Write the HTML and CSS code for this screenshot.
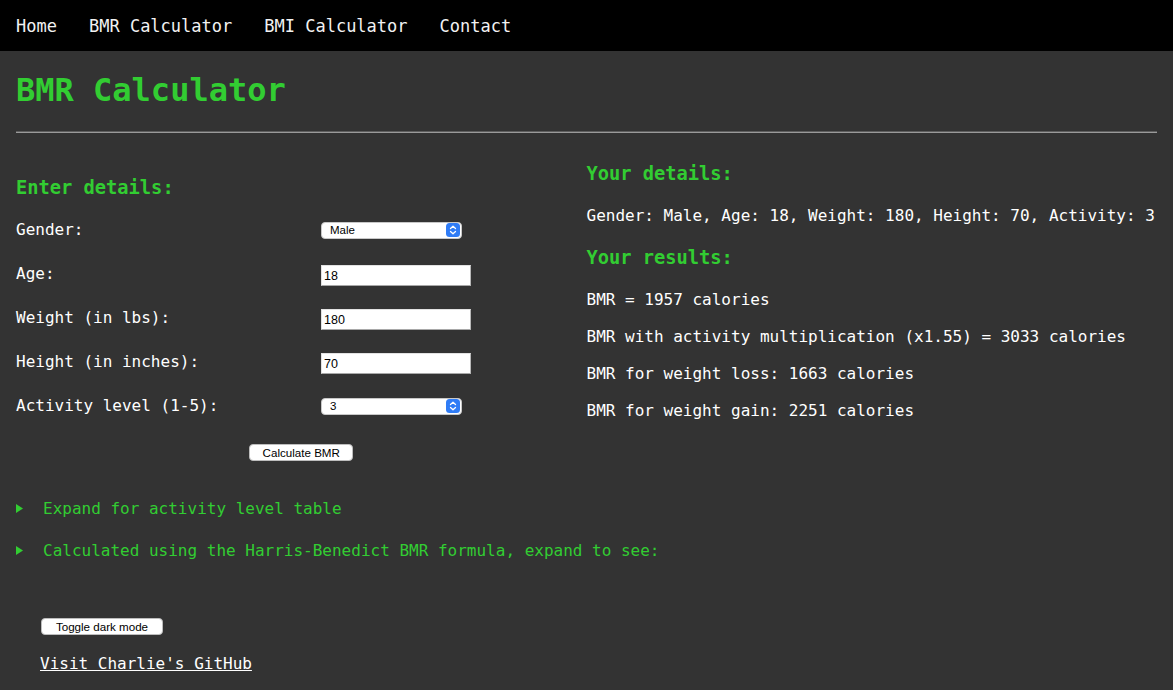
FILE: index.html
```html
<!DOCTYPE html>
<html lang="en">
<head>
<meta charset="utf-8">
<title>BMR Calculator</title>
<link rel="stylesheet" href="styles.css">
</head>
<body>
<nav class="topnav">
  <a href="#">Home</a>
  <a href="#">BMR Calculator</a>
  <a href="#">BMI Calculator</a>
  <a href="#">Contact</a>
</nav>
<main class="main">
  <h1 class="title">BMR Calculator</h1>
  <hr class="rule">
  <div class="columns">
    <form class="col col-left">
      <h3 class="heading">Enter details:</h3>
      <div class="fields">
        <label class="label" for="gender">Gender:</label>
        <span class="select-wrap">
          <select id="gender" class="select"><option>Male</option><option>Female</option></select>
          <svg class="stepper" width="14" height="14" viewBox="0 0 14 14"><rect width="14" height="14" rx="3.5" fill="#2f7cf6"/><path d="M4.5 5.6 7 3.3 9.5 5.6M4.5 8.4 7 10.7 9.5 8.4" fill="none" stroke="#fff" stroke-width="1.3" stroke-linecap="round" stroke-linejoin="round"/></svg>
        </span>
        <label class="label" for="age">Age:</label>
        <input id="age" class="input" type="text" value="18">
        <label class="label" for="weight">Weight (in lbs):</label>
        <input id="weight" class="input" type="text" value="180">
        <label class="label" for="height">Height (in inches):</label>
        <input id="height" class="input" type="text" value="70">
        <label class="label" for="activity">Activity level (1-5):</label>
        <span class="select-wrap">
          <select id="activity" class="select"><option>1</option><option>2</option><option selected>3</option><option>4</option><option>5</option></select>
          <svg class="stepper" width="14" height="14" viewBox="0 0 14 14"><rect width="14" height="14" rx="3.5" fill="#2f7cf6"/><path d="M4.5 5.6 7 3.3 9.5 5.6M4.5 8.4 7 10.7 9.5 8.4" fill="none" stroke="#fff" stroke-width="1.3" stroke-linecap="round" stroke-linejoin="round"/></svg>
        </span>
      </div>
      <div class="submit-row">
        <button type="button" class="btn btn-calc">Calculate BMR</button>
      </div>
    </form>
    <section class="col col-right">
      <h3 class="heading">Your details:</h3>
      <p class="text">Gender: Male, Age: 18, Weight: 180, Height: 70, Activity: 3</p>
      <h3 class="heading">Your results:</h3>
      <p class="text">BMR = 1957 calories</p>
      <p class="text">BMR with activity multiplication (x1.55) = 3033 calories</p>
      <p class="text">BMR for weight loss: 1663 calories</p>
      <p class="text">BMR for weight gain: 2251 calories</p>
    </section>
  </div>
  <div class="disclosures">
    <details class="details">
      <summary class="summary"><svg class="marker" width="7" height="9" viewBox="0 0 7 9"><path d="M0 0 7 4.5 0 9Z" fill="#32cd32"/></svg>Expand for activity level table</summary>
    </details>
    <details class="details">
      <summary class="summary"><svg class="marker" width="7" height="9" viewBox="0 0 7 9"><path d="M0 0 7 4.5 0 9Z" fill="#32cd32"/></svg>Calculated using the Harris-Benedict BMR formula, expand to see:</summary>
    </details>
  </div>
  <footer class="footer">
    <button type="button" class="btn btn-toggle">Toggle dark mode</button>
    <a class="gh-link" href="#">Visit Charlie's GitHub</a>
  </footer>
</main>
</body>
</html>
```

FILE: styles.css
```css
html, body {
  margin: 0;
  padding: 0;
}
body {
  background: #333333;
  color: #ffffff;
  font-family: "DejaVu Sans Mono", "Liberation Mono", monospace;
  font-size: 16px;
}
.topnav {
  background: #000000;
  height: 51px;
  display: flex;
}
.topnav a {
  color: #f2f2f2;
  text-decoration: none;
  font-size: 17px;
  line-height: 23px;
  padding: 15px 16px 13px;
}
.main {
  padding: 0 16px 30px;
}
.title {
  color: #32cd32;
  font-size: 32px;
  line-height: 38px;
  margin: 20px 0 0;
  font-weight: bold;
}
.rule {
  margin: 22px 0 0;
  height: 0;
  border: 0;
  border-top: 1px solid #5e5e5e;
  border-bottom: 1px solid #9a9a9a;
}
.columns {
  display: flex;
}
.col {
  flex: 1 1 0;
  min-width: 0;
}
.col-left {
  padding-top: 24px;
}
.col-right {
  padding-top: 10px;
}
.heading {
  color: #32cd32;
  font-size: 18.72px;
  line-height: 22px;
  font-weight: bold;
  margin: 20px 0;
}
.text {
  margin: 16px 0;
  line-height: 21px;
}
.heading + .text {
  margin-top: 20px;
}
.text + .heading {
  margin-top: 21px;
}
.fields {
  display: grid;
  grid-template-columns: 305px auto;
  grid-auto-rows: 22px;
  row-gap: 22px;
  align-items: center;
  justify-items: start;
}
.label {
  line-height: 22px;
}
.select-wrap {
  position: relative;
  display: inline-block;
  width: 141px;
  height: 17px;
  margin-top: 0;
}
.select {
  -webkit-appearance: none;
  appearance: none;
  width: 141px;
  height: 17px;
  box-sizing: border-box;
  border: 1px solid #c8c8c8;
  border-radius: 4px;
  background: #ffffff;
  color: #000000;
  font-family: "Liberation Sans", Arial, sans-serif;
  font-size: 11.5px;
  padding: 0 0 0 8px;
  margin: 0;
  line-height: 15px;
  display: block;
}
.stepper {
  position: absolute;
  right: 2px;
  top: 1.5px;
  pointer-events: none;
}
.input {
  width: 150px;
  height: 21px;
  box-sizing: border-box;
  margin: 2px 0 0;
  border: 1px solid;
  border-color: #e2e2e2 #b8b8b8 #a8a8a8 #e2e2e2;
  background: #ffffff;
  color: #000000;
  font-family: "Liberation Sans", Arial, sans-serif;
  font-size: 12.5px;
  padding: 1px 2px 0;
}
.submit-row {
  display: flex;
  justify-content: center;
  margin-top: 27px;
}
.btn {
  background: #ffffff;
  color: #000000;
  border: 1px solid #bdbdbd;
  border-radius: 4px;
  font-family: "Liberation Sans", Arial, sans-serif;
  font-size: 11.6px;
  height: 17px;
  line-height: 15px;
  padding: 0 8px;
  margin: 0;
}
.btn-calc {
  width: 104px;
}
.btn-toggle {
  width: 122px;
  display: block;
}
.disclosures {
  margin-top: 37px;
  display: flex;
  flex-direction: column;
  gap: 21px;
}
.summary {
  list-style: none;
  color: #32cd32;
  line-height: 21px;
  display: flex;
  align-items: center;
  cursor: pointer;
}
.summary::-webkit-details-marker {
  display: none;
}
.marker {
  margin-right: 20px;
  flex: none;
}
.footer {
  margin-top: 57px;
  padding-left: 24px;
  display: flex;
  flex-direction: column;
  align-items: flex-start;
  gap: 18px;
}
.btn-toggle {
  margin-left: 1px;
}
.gh-link {
  color: #ffffff;
  text-decoration: underline;
  line-height: 21px;
}
```
